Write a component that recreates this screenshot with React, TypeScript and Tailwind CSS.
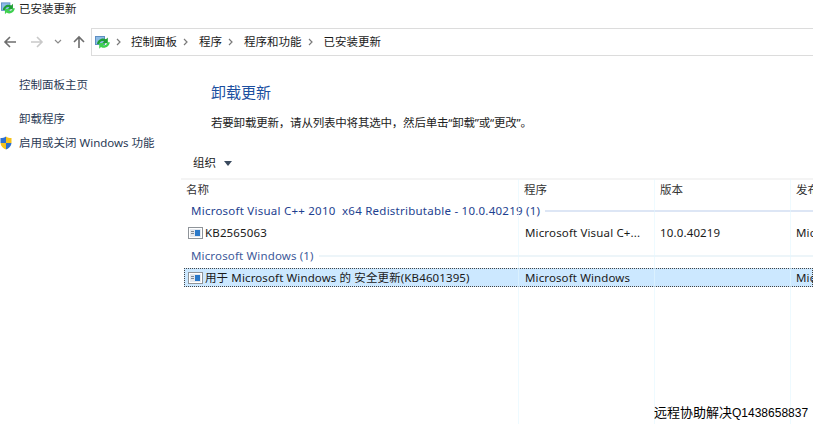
const UpdateIcon = ({ className }: { className: string }) => (
  <svg viewBox="0 0 15 13" className={className}>
    <rect x="0.5" y="0.5" width="9" height="8" fill="#8dbbe6" stroke="#5f8fc2" />
    <path d="M2 8C2.500 3.500 7.500 1 11 3.300L12.800 1.500V7.300H7L9 5.400C7 4.300 4.800 5.500 4.500 8Z" fill="#1f9e33" />
    <path d="M14.800 6.300C14.300 10.800 9.500 13.200 6 10.900L4.200 12.700V7H10L8 8.900C10 10 12 8.800 12.300 6.300Z" fill="#3fd04f" />
  </svg>
);

const KbIcon = () => (
  <svg viewBox="0 0 15 12" className="h-3 w-[15px] shrink-0">
    <rect x="0.5" y="0.5" width="14" height="11" fill="#fff" stroke="#8f9499" />
    <rect x="2" y="2" width="11" height="8" fill="#e4e8ee" />
    <rect x="7" y="3" width="5" height="6" fill="#2a78c8" />
    <rect x="3" y="4" width="3" height="1" fill="#7d8894" />
    <rect x="3" y="6" width="3" height="1" fill="#7d8894" />
  </svg>
);

const Chevron = () => (
  <svg viewBox="0 0 6 8" className="h-2 w-[6px] shrink-0">
    <path d="M1 1l3 3-3 3" fill="none" stroke="#7a7a7a" strokeWidth="1.200" />
  </svg>
);

const Arrow = ({ d, color }: { d: string; color: string }) => (
  <svg viewBox="0 0 14 14" className="h-[14px] w-[14px] shrink-0">
    <path d={d} fill="none" stroke={color} strokeWidth="1.600" />
  </svg>
);

const Shield = () => (
  <svg viewBox="0 0 12 14" className="h-[14px] w-3 shrink-0">
    <path d="M6 0.500C4.500 1.500 2.500 2 0.500 2v5H6Z" fill="#2c6fd0" />
    <path d="M6 0.500C7.500 1.500 9.500 2 11.500 2v5H6Z" fill="#f3c21d" />
    <path d="M6 7h5.500c-.3 3-2.500 5.500-5.500 6.500Z" fill="#2c6fd0" />
    <path d="M0.500 7H6v6.500C3 12.500 .8 10 .5 7Z" fill="#f3c21d" />
  </svg>
);

const crumbs = ["控制面板", "程序", "程序和功能", "已安装更新"];

export default function App() {
  return (
    <div className="relative flex h-[424px] w-[813px] flex-col overflow-hidden whitespace-nowrap bg-white font-['Noto_Sans','Noto_Sans_CJK_SC',sans-serif] text-[11.5px] text-[#1a1a1a]">
      {/* title bar */}
      <div className="flex h-[17px] items-center gap-[4px] pl-[1px]">
        <UpdateIcon className="h-[13px] w-[14px]" />
        <span className="text-[#222]">已安装更新</span>
      </div>

      {/* nav + address */}
      <div className="mt-[11px] flex h-[28px] items-center">
        <div className="flex w-[91px] items-center pl-[3px]">
          <Arrow d="M13 7H2M7 2L2 7l5 5" color="#6d6d6d" />
          <span className="ml-[13px]"><Arrow d="M1 7h11M7 2l5 5-5 5" color="#c9c9c9" /></span>
          <svg viewBox="0 0 8 6" className="ml-[10px] h-[6px] w-2"><path d="M1 1l3 3 3-3" fill="none" stroke="#8a8a8a" strokeWidth="1.200" /></svg>
          <span className="ml-[10px]"><Arrow d="M7 13V2M2 7l5-5 5 5" color="#6d6d6d" /></span>
        </div>
        <div className="flex h-[28px] flex-1 items-center border border-r-0 border-[#dcdcdc] pl-[3px]">
          <UpdateIcon className="h-[13px] w-[15px]" />
          <span className="ml-[6px]"><Chevron /></span>
          {crumbs.map((c, i) => (
            <div key={c} className="flex items-center">
              {i > 0 && <Chevron />}
              <span className={i === 0 ? "ml-[9px] mr-[6px]" : "ml-[10px] mr-[6px]"}>{c}</span>
            </div>
          ))}
        </div>
      </div>

      <div className="flex flex-1">
        {/* sidebar */}
        <aside className="w-[181px] shrink-0 text-[#2a3a55]">
          <div className="ml-[19px] mt-[21px] leading-4">控制面板主页</div>
          <div className="ml-[19px] mt-[18px] leading-4">卸载程序</div>
          <div className="mt-[8px] flex items-center gap-[7px] leading-4">
            <Shield />
            <span>启用或关闭 Windows 功能</span>
          </div>
        </aside>

        {/* main */}
        <main className="relative flex min-w-0 flex-1 flex-col">
          <h1 className="ml-[30px] mt-[26px] text-[15px] leading-5 text-[#1c4fa0]">卸载更新</h1>
          <p className="ml-[30px] mt-[13px] leading-4 tracking-[-0.2px] text-[#222]">若要卸载更新，请从列表中将其选中，然后单击“卸载”或“更改”。</p>

          <div className="ml-[12px] mt-[24px] flex items-center gap-[8px] leading-4">
            <span>组织</span>
            <svg viewBox="0 0 8 5" className="h-[5px] w-2"><path d="M0 0h8L4 5Z" fill="#3a4a5e" /></svg>
          </div>

          <div className="mt-[7px] h-[2px] bg-[#f4f4f4]" />
          <div className="flex h-[20px] items-center text-[#333]">
            <div className="w-[337px] shrink-0 pl-[5px]">名称</div>
            <div className="w-[136px] shrink-0 pl-[6px]">程序</div>
            <div className="w-[136px] shrink-0 pl-[6px]">版本</div>
            <div className="pl-[6px]">发布者</div>
          </div>

          <div className="flex h-[22px] items-center gap-[5px] pl-[10px] text-[#1e3f8f]">
            <span className="shrink-0 whitespace-pre tracking-[0.24px]">Microsoft Visual C++ 2010  x64 Redistributable - 10.0.40219 (1)</span>
            <div className="h-[2px] flex-1 bg-[#dde6f5]" />
          </div>
          <div className="flex h-[21px] items-center tracking-[0.15px]">
            <div className="flex w-[337px] shrink-0 items-center gap-[2px] pl-[7px]"><KbIcon /><span>KB2565063</span></div>
            <div className="w-[136px] shrink-0 pl-[7px]">Microsoft Visual C+...</div>
            <div className="w-[136px] shrink-0 pl-[6px]">10.0.40219</div>
            <div className="pl-[6px]">Mic</div>
          </div>
          <div className="flex h-[24px] items-center gap-[5px] pl-[10px] pt-[1px] tracking-[0.15px] text-[#3d5a9a]">
            <span className="shrink-0">Microsoft Windows (1)</span>
            <div className="h-[2px] flex-1 bg-[#edf5f9]" />
          </div>
          <div className="ml-[3px] mt-[1px] flex h-[19px] items-center border border-dotted border-[#444] bg-[#cce8ff] tracking-[0.12px]">
            <div className="flex w-[333px] shrink-0 items-center gap-[2px] pl-[3px]"><KbIcon /><span className="whitespace-pre">用于 Microsoft Windows 的 安全更新(KB4601395)</span></div>
            <div className="w-[136px] shrink-0 pl-[7px]">Microsoft Windows</div>
            <div className="w-[136px] shrink-0" />
            <div className="pl-[6px]">Mic</div>
          </div>

          {/* column guides */}
          <div className="pointer-events-none absolute bottom-0 left-[337px] top-[123px] w-[1px] bg-[#e3f6ff]/60" />
          <div className="pointer-events-none absolute bottom-0 left-[473px] top-[123px] w-[1px] bg-[#e3f6ff]/60" />
          <div className="pointer-events-none absolute bottom-0 left-[609px] top-[123px] w-[1px] bg-[#e3f6ff]/60" />
        </main>
      </div>

      {/* remote-help watermark */}
      <div className="absolute left-[654px] top-[404px] flex items-baseline leading-4 text-black">
        <span className="font-['Noto_Sans_CJK_SC',sans-serif] text-[13px]">远程协助解决</span>
        <span className="font-['Liberation_Sans',sans-serif] text-[12px]">Q1438658837</span>
      </div>
    </div>
  );
}
